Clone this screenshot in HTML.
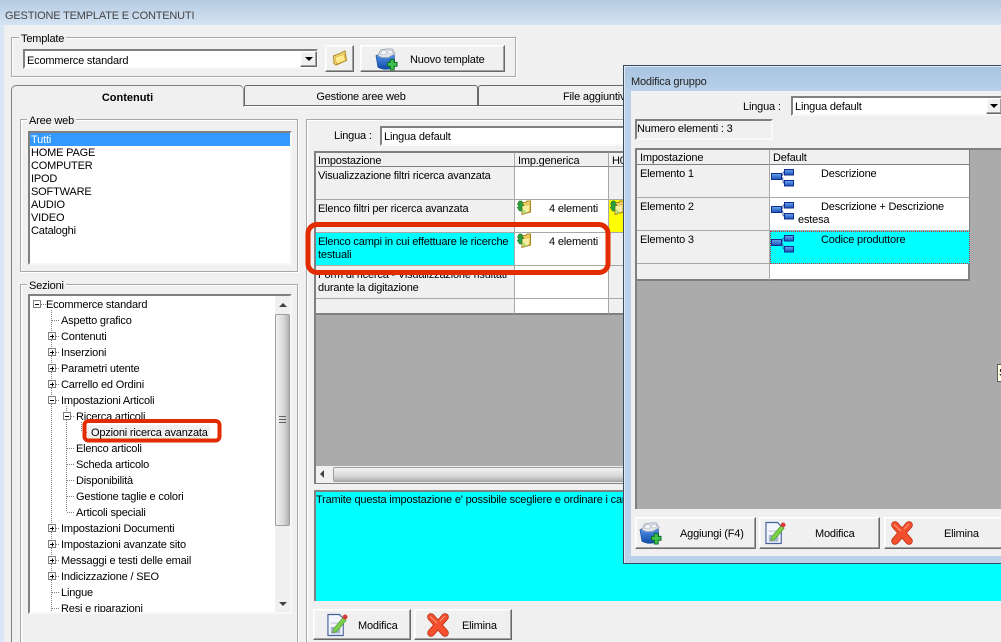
<!DOCTYPE html>
<html><head><meta charset="utf-8">
<style>
html,body{margin:0;padding:0;width:1001px;height:642px;overflow:hidden}
body{position:relative;background:#f0f0f0;font-family:"Liberation Sans",sans-serif;font-size:11px;letter-spacing:-.18px;color:#000;line-height:13px}
div{position:absolute;box-sizing:border-box;white-space:nowrap}
#r{left:0;top:0;width:1001px;height:642px;overflow:hidden}
.g{border:1px solid #a8a8a8;box-shadow:inset 1px 1px 0 #fff,1px 1px 0 #fff}
.lg{background:#f0f0f0;padding:0 2px}
.s{background:#fff;border:2px solid;border-color:#808080 #f8f8f8 #f8f8f8 #808080}
.b{background:#f0f0f0;border:1px solid;border-color:#fff #696969 #696969 #fff;box-shadow:inset -1px -1px 0 #a0a0a0,inset 1px 1px 0 #f8f8f8}
.c{background:#f0f0f0;border:1px solid #a8a8a8;border-width:0 1px 1px 0;padding:3px 2px 0;overflow:hidden}
.h{border-top:1px solid #808080;border-bottom:1px solid #808080;padding:2px 2px 0}
.w{background:#fff}
svg.i,svg.o{position:absolute;overflow:visible}
</style></head><body><div id="r">
<svg width="0" height="0" style="position:absolute">
<defs>
<linearGradient id="fd" x1="0" y1="0" x2="1" y2="1"><stop offset="0" stop-color="#fff6b8"/><stop offset="1" stop-color="#e8bd3e"/></linearGradient>
<linearGradient id="bl" x1="0" y1="0" x2="0" y2="1"><stop offset="0" stop-color="#5a9cf0"/><stop offset="1" stop-color="#0d4aa8"/></linearGradient>
<linearGradient id="tb" x1="0" y1="0" x2="0" y2="1"><stop offset="0" stop-color="#6aa8f0"/><stop offset="1" stop-color="#1a50b8"/></linearGradient>
<symbol id="folder" viewBox="0 0 16 16"><path d="M1.500 6 L9 3 L13 1 L14.500 10.500 L4 15 L2 13.500Z" fill="url(#fd)" stroke="#b08a20" stroke-width="1"/><path d="M3 7 L12 4.500 L13.500 10.500 L4.500 14Z" fill="#ffe98a" stroke="#c9a030" stroke-width=".6"/></symbol>
<symbol id="gfolder" viewBox="0 0 16 16"><path d="M6 2.500 L10 2.500 L11 1 L14.500 1 L14.500 12 L6 14.500Z" fill="#f0d060" stroke="#a88520" stroke-width="1"/><path d="M6 6 L14 4.500 L13.500 11.500 L6.500 14Z" fill="#f8ec9e" stroke="#c9a030" stroke-width=".5"/><path d="M3 1 L6 1 L6 3 L8 5 L6 6 L6 11 L3.500 11 L1 7 L3 7 L1.500 4Z" fill="#2e9c3c" stroke="#0d6a22" stroke-width=".5"/><path d="M7 9 L11 13 L7.500 13.500Z" fill="#9fdc70"/></symbol>
<symbol id="tree" viewBox="0 0 23 18"><path d="M10 7 Q12 7 12 4 Q12 3 13 3 M10 8 Q12 8 12 12 Q12 14 13 14" fill="none" stroke="#3a5aa8"/><rect x=".5" y="4.500" width="10" height="6" fill="url(#tb)" stroke="#122e8c"/><rect x="13.500" y=".5" width="9" height="5.500" fill="url(#tb)" stroke="#122e8c"/><rect x="13.500" y="11.500" width="9" height="5.500" fill="url(#tb)" stroke="#122e8c"/></symbol>
<symbol id="box" viewBox="0 0 24 24"><path d="M1 8 Q12 3 20 7 L21 19 Q12 25 3 20Z" fill="url(#bl)" stroke="#1c4fa0" stroke-width=".7"/><path d="M3 8 L6 2 L12 1 L18 1 L21 6 L14 10 L7 10Z" fill="#dfe3ea" stroke="#8a95a5" stroke-width=".7"/><path d="M7 3 L12 3 L11 7 L6 7Z M13 3 L18 3 L18 6 L13 6Z" fill="#f8f8f8" stroke="#a8b0bc" stroke-width=".5"/><path d="M16 12 H20 V15 H23 V19 H20 V23 H16 V19 H13 V15 H16Z" fill="#3fc24a" stroke="#0e6a2a" stroke-width="1"/></symbol>
<symbol id="edit" viewBox="0 0 22 24"><path d="M1 1 H13 L17 5 V23 H1Z" fill="#f2f5fb" stroke="#44639c" stroke-width="1.200"/><rect x="4" y="14" width="10" height="7" fill="#a8b6d4"/><path d="M4 10 H12" stroke="#b8c2d8"/><path d="M7 16 L17 4 L20 7 L10 19 L6 20Z" fill="#7cd04a" stroke="#4a9a2a" stroke-width=".7"/><circle cx="19" cy="3.500" r="2.500" fill="#d8383a"/></symbol>
<symbol id="x" viewBox="0 0 24 24"><path d="M5 4 L19 20 M19 4 L5 20" fill="none" stroke="#b82a10" stroke-width="7.500" stroke-linecap="round"/><path d="M5 4 L19 20 M19 4 L5 20" fill="none" stroke="#f4502e" stroke-width="6" stroke-linecap="round"/><path d="M4 3.500 L11 10 M19 3 L14 8" fill="none" stroke="#ff9a80"/></symbol>
</defs></svg>

<!-- window chrome -->
<div style="left:0;top:0;width:1001px;height:25px;background:linear-gradient(#b4c8de,#bfd2e7 30%,#d5e3f3)"></div>
<div style="left:0;top:25px;width:4px;height:617px;background:#d8e6f6"></div>
<div style="left:5px;top:10px;color:#444">GESTIONE TEMPLATE E CONTENUTI</div>

<!-- Template group -->
<div class="g" style="left:11px;top:37px;width:505px;height:40px"></div>
<div class="lg" style="left:19px;top:33px">Template</div>
<div class="s" style="left:23px;top:49px;width:295px;height:20px;padding:4px 2px 0">Ecommerce standard</div>
<div class="b" style="left:300px;top:51px;width:17px;height:16px"><div style="left:4px;top:5px;border:4px solid transparent;border-top:4px solid #000;border-bottom:0"></div></div>
<div class="b" style="left:325px;top:45px;width:29px;height:27px"><svg class="i" style="left:6px;top:4px" width="16" height="16"><use href="#folder"/></svg></div>
<div class="b" style="left:360px;top:45px;width:145px;height:27px"><svg class="i" style="left:14px;top:2px" width="23" height="23"><use href="#box"/></svg><div style="left:49px;top:8px">Nuovo template</div></div>

<!-- Tabs -->
<div style="left:11px;top:106px;width:1px;height:536px;background:#808080"></div>
<div style="left:244px;top:106px;width:400px;height:1px;background:#fff"></div>
<div style="left:244px;top:85px;width:234px;height:21px;background:#f0f0f0;border:1px solid #696969;border-radius:3px 3px 0 0;text-align:center;padding-top:5px">Gestione aree web</div>
<div style="left:478px;top:85px;width:170px;height:21px;background:#f0f0f0;border:1px solid #696969;border-radius:3px 3px 0 0;padding:5px 0 0 84px">File aggiuntivi</div>
<div style="left:11px;top:85px;width:233px;height:22px;background:#f0f0f0;border:1px solid #808080;border-bottom:0;border-right:1px solid #a0a0a0;border-radius:5px 5px 0 0;text-align:center;padding-top:6px;font-weight:bold;letter-spacing:0">Contenuti</div>

<!-- Aree web -->
<div class="g" style="left:20px;top:119px;width:278px;height:153px"></div>
<div class="lg" style="left:27px;top:115px">Aree web</div>
<div class="s" style="left:28px;top:131px;width:264px;height:134px"></div>
<div style="left:30px;top:133px;width:260px;height:13px;background:#3399ff"></div>
<div style="left:31px;top:134px;color:#fff">Tutti</div>
<div style="left:31px;top:147px">HOME PAGE</div>
<div style="left:31px;top:160px">COMPUTER</div>
<div style="left:31px;top:173px">IPOD</div>
<div style="left:31px;top:186px">SOFTWARE</div>
<div style="left:31px;top:199px">AUDIO</div>
<div style="left:31px;top:212px">VIDEO</div>
<div style="left:31px;top:225px">Cataloghi</div>

<!-- Sezioni -->
<div class="g" style="left:20px;top:284px;width:278px;height:358px;border-bottom:0"></div>
<div class="lg" style="left:27px;top:280px">Sezioni</div>
<div class="s" style="left:28px;top:294px;width:264px;height:320px;overflow:hidden"></div>
<svg class="o" style="left:0;top:0" width="300" height="642">
<g stroke="#808080" stroke-dasharray="1 1" fill="none" shape-rendering="crispEdges">
<path d="M51.500 310V612M66.500 406V512M81.500 422V432"/>
<path d="M41 304.500H46M52 320.500H60M56 336.500H60M56 352.500H60M56 368.500H60M56 384.500H60M56 400.500H60M71 416.500H75M86 432.500H90M67 448.500H75M67 464.500H75M67 480.500H75M67 496.500H75M67 512.500H75M56 528.500H60M56 544.500H60M56 560.500H60M56 576.500H60M52 592.500H60M52 608.500H60"/>
</g>
<g fill="#fff" stroke="#808080" shape-rendering="crispEdges">
<rect x="33.500" y="300.500" width="7" height="7"/><rect x="48.500" y="332.500" width="7" height="7"/><rect x="48.500" y="348.500" width="7" height="7"/><rect x="48.500" y="364.500" width="7" height="7"/><rect x="48.500" y="380.500" width="7" height="7"/><rect x="48.500" y="396.500" width="7" height="7"/><rect x="63.500" y="412.500" width="7" height="7"/><rect x="48.500" y="524.500" width="7" height="7"/><rect x="48.500" y="540.500" width="7" height="7"/><rect x="48.500" y="556.500" width="7" height="7"/><rect x="48.500" y="572.500" width="7" height="7"/>
</g>
<g stroke="#000" shape-rendering="crispEdges">
<path d="M35 304.500H39M50 336.500H54M52.500 334.500V338.500M50 352.500H54M52.500 350.500V354.500M50 368.500H54M52.500 366.500V370.500M50 384.500H54M52.500 382.500V386.500M50 400.500H54M65 416.500H69M50 528.500H54M52.500 526.500V530.500M50 544.500H54M52.500 542.500V546.500M50 560.500H54M52.500 558.500V562.500M50 576.500H54M52.500 574.500V578.500"/>
</g>
</svg>
<div style="left:46px;top:299px">Ecommerce standard</div>
<div style="left:61px;top:315px">Aspetto grafico</div>
<div style="left:61px;top:331px">Contenuti</div>
<div style="left:61px;top:347px">Inserzioni</div>
<div style="left:61px;top:363px">Parametri utente</div>
<div style="left:61px;top:379px">Carrello ed Ordini</div>
<div style="left:61px;top:395px">Impostazioni Articoli</div>
<div style="left:76px;top:411px">Ricerca articoli</div>
<div style="left:87px;top:425px;width:123px;height:15px;background:#f0f0f0"></div>
<div style="left:91px;top:427px">Opzioni ricerca avanzata</div>
<div style="left:76px;top:443px">Elenco articoli</div>
<div style="left:76px;top:459px">Scheda articolo</div>
<div style="left:76px;top:475px">Disponibilità</div>
<div style="left:76px;top:491px">Gestione taglie e colori</div>
<div style="left:76px;top:507px">Articoli speciali</div>
<div style="left:61px;top:523px">Impostazioni Documenti</div>
<div style="left:61px;top:539px">Impostazioni avanzate sito</div>
<div style="left:61px;top:555px">Messaggi e testi delle email</div>
<div style="left:61px;top:571px">Indicizzazione / SEO</div>
<div style="left:61px;top:587px">Lingue</div>
<div style="left:61px;top:603px;height:9px;overflow:hidden">Resi e riparazioni</div>
<!-- tree scrollbar -->
<div style="left:275px;top:296px;width:15px;height:316px;background:#f0f0f0"></div>
<div style="left:279px;top:303px;border:4px solid transparent;border-bottom:4px solid #404040;border-top:0"></div>
<div style="left:279px;top:602px;border:4px solid transparent;border-top:4px solid #404040;border-bottom:0"></div>
<div style="left:275px;top:314px;width:15px;height:212px;background:linear-gradient(90deg,#f2f2f2,#d8d8d8 60%,#b0b0b0);border:1px solid #a0a0a0;border-radius:2px"></div>
<div style="left:279px;top:416px;width:7px;height:7px;border-top:1px solid #606060;border-bottom:1px solid #606060"><div style="left:0;top:2px;width:7px;height:1px;background:#606060"></div></div>

<!-- right group -->
<div class="g" style="left:306px;top:119px;width:720px;height:523px;border-bottom:0"></div>
<div style="left:334px;top:130px">Lingua :</div>
<div class="s" style="left:380px;top:126px;width:260px;height:20px;padding:3px 2px 0">Lingua default</div>

<!-- main grid -->
<div style="left:314px;top:151px;width:312px;height:333px;background:#ababab;border:2px solid #808080;border-width:2px 0 2px 2px"></div>
<div style="left:316px;top:153px;width:310px;height:162px;background:#fff"></div>
<div class="c h" style="left:316px;top:152px;width:199px;height:15px">Impostazione</div>
<div class="c h" style="left:515px;top:152px;width:94px;height:15px;padding-left:3px">Imp.generica</div>
<div class="c h" style="left:609px;top:152px;width:20px;height:15px;padding-left:3px">H0</div>

<div class="c" style="left:316px;top:167px;width:199px;height:33px">Visualizzazione filtri ricerca avanzata</div>
<div class="c w" style="left:515px;top:167px;width:94px;height:33px"></div>
<div class="c" style="left:609px;top:167px;width:20px;height:33px"></div>

<div class="c" style="left:316px;top:200px;width:199px;height:33px">Elenco filtri per ricerca avanzata</div>
<div class="c w" style="left:515px;top:200px;width:94px;height:33px;text-align:right;padding-right:10px">4 elementi</div>
<svg class="i" style="left:516px;top:200px" width="16" height="16"><use href="#gfolder"/></svg>
<div class="c" style="left:609px;top:200px;width:20px;height:33px;background:#ffff00"></div>
<svg class="i" style="left:609px;top:200px" width="16" height="16"><use href="#gfolder"/></svg>

<div class="c" style="left:316px;top:233px;width:199px;height:33px;background:#00ffff">Elenco campi in cui effettuare le ricerche<br>testuali</div>
<div class="c w" style="left:515px;top:233px;width:94px;height:33px;text-align:right;padding-right:10px">4 elementi</div>
<svg class="i" style="left:516px;top:233px" width="16" height="16"><use href="#gfolder"/></svg>
<div class="c" style="left:609px;top:233px;width:20px;height:33px"></div>

<div class="c" style="left:316px;top:266px;width:199px;height:33px">Form di ricerca - Visualizzazione risultati<br>durante la digitazione</div>
<div class="c w" style="left:515px;top:266px;width:94px;height:33px"></div>
<div class="c" style="left:609px;top:266px;width:20px;height:33px"></div>

<div class="c" style="left:316px;top:299px;width:199px;height:16px;border-bottom:2px solid #808080"></div>
<div class="c w" style="left:515px;top:299px;width:94px;height:16px;border-bottom:2px solid #808080"></div>
<div class="c" style="left:609px;top:299px;width:20px;height:16px;border-bottom:2px solid #808080"></div>

<!-- main h scrollbar -->
<div style="left:316px;top:466px;width:310px;height:17px;background:#f0f0f0"></div>
<div style="left:320px;top:470px;border:4px solid transparent;border-right:4px solid #404040;border-left:0"></div>
<div style="left:333px;top:467px;width:300px;height:15px;background:linear-gradient(#f2f2f2,#d8d8d8 60%,#b0b0b0);border:1px solid #a0a0a0;border-radius:2px"></div>

<!-- description -->
<div style="left:314px;top:490px;width:687px;height:111px;background:#00ffff;border:1px solid #808080;border-width:2px 0 0 2px;padding:2px 0 0 0;overflow:hidden">Tramite questa impostazione e' possibile scegliere e ordinare i campi</div>

<div class="b" style="left:313px;top:609px;width:98px;height:31px"><svg class="i" style="left:13px;top:3px" width="21" height="24"><use href="#edit"/></svg><div style="left:44px;top:10px">Modifica</div></div>
<div class="b" style="left:414px;top:609px;width:98px;height:31px"><svg class="i" style="left:11px;top:3px" width="24" height="24"><use href="#x"/></svg><div style="left:47px;top:10px">Elimina</div></div>

<!-- red annotations -->
<svg class="o" style="left:0;top:0;z-index:5" width="1001" height="642">
<rect x="308" y="224.500" width="300" height="48" rx="9" fill="none" stroke="#e32b00" stroke-width="5"/>
<rect x="84.500" y="421" width="135" height="19.500" rx="4" fill="none" stroke="#e32b00" stroke-width="4"/>
</svg>

<!-- dialog -->
<div style="left:623px;top:65px;width:378px;height:499px;z-index:6;background:linear-gradient(#a9c4e0,#b9d1ea 26px);border:1px solid #3a4a5a;border-right:0;box-shadow:inset 1px 1px 0 #dfe9f5">
<div style="left:7px;top:10px;color:#222">Modifica gruppo</div>
<div style="left:7px;top:25px;width:370px;height:465px;background:#f0f0f0"></div>
<div style="left:119px;top:35px">Lingua :</div>
<div class="s" style="left:167px;top:30px;width:212px;height:20px;padding:3px 2px 0">Lingua default</div>
<div class="b" style="left:362px;top:32px;width:16px;height:16px"><div style="left:3px;top:5px;border:4px solid transparent;border-top:4px solid #000;border-bottom:0"></div></div>
<div style="left:11px;top:53px;width:138px;height:21px;border:2px solid;border-color:#808080 #f8f8f8 #f8f8f8 #808080;padding:2px 0 0">Numero elementi : 3</div>

<div style="left:11px;top:82px;width:366px;height:361px;background:#ababab;border:2px solid #808080;border-width:2px 0 0 2px"></div>
<div class="c h" style="left:13px;top:83px;width:133px;height:16px;padding-left:3px">Impostazione</div>
<div class="c h" style="left:146px;top:83px;width:200px;height:16px;border-right:1px solid #808080;padding-left:3px">Default</div>

<div class="c" style="left:13px;top:99px;width:133px;height:33px;padding-left:3px">Elemento 1</div>
<div class="c w" style="left:146px;top:99px;width:200px;height:33px;padding-left:28px;border-right:1px solid #808080"><span style="margin-left:23px">Descrizione</span></div>
<svg class="i" style="left:147px;top:103px" width="23" height="18"><use href="#tree"/></svg>

<div class="c" style="left:13px;top:132px;width:133px;height:33px;padding-left:3px">Elemento 2</div>
<div class="c w" style="left:146px;top:132px;width:200px;height:33px;padding-left:28px;border-right:1px solid #808080"><span style="margin-left:23px">Descrizione + Descrizione</span><br>estesa</div>
<svg class="i" style="left:147px;top:136px" width="23" height="18"><use href="#tree"/></svg>

<div class="c" style="left:13px;top:165px;width:133px;height:33px;padding-left:3px">Elemento 3</div>
<div class="c" style="left:146px;top:165px;width:200px;height:33px;background:#00ffff;padding:2px 0 0 27px;border:1px dotted #c03030"><span style="margin-left:23px">Codice produttore</span></div>
<svg class="i" style="left:147px;top:169px" width="23" height="18"><use href="#tree"/></svg>

<div class="c" style="left:13px;top:198px;width:133px;height:17px;border-bottom:2px solid #808080"></div>
<div class="c w" style="left:146px;top:198px;width:200px;height:17px;border-bottom:2px solid #808080;border-right:2px solid #808080"></div>

<div style="left:373px;top:298px;width:6px;height:18px;background:#ffffe1;border:1px solid #606060;border-right:0;padding:2px 0 0 1px;overflow:hidden">S</div>

<div class="b" style="left:11px;top:451px;width:121px;height:32px"><svg class="i" style="left:3px;top:4px" width="23" height="23"><use href="#box"/></svg><div style="left:44px;top:10px">Aggiungi (F4)</div></div>
<div class="b" style="left:135px;top:451px;width:121px;height:32px"><svg class="i" style="left:5px;top:3px" width="21" height="24"><use href="#edit"/></svg><div style="left:55px;top:10px">Modifica</div></div>
<div class="b" style="left:260px;top:451px;width:125px;height:32px"><svg class="i" style="left:5px;top:3px" width="24" height="24"><use href="#x"/></svg><div style="left:59px;top:10px">Elimina</div></div>
</div>
</div></body></html>
